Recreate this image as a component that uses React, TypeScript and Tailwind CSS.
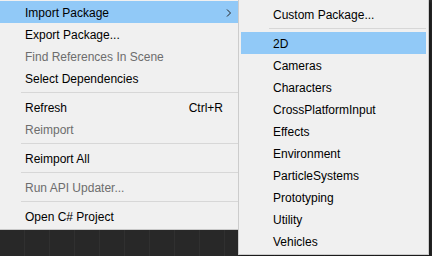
import { ReactNode } from 'react';

type Item = { label: string; disabled?: boolean; shortcut?: string; active?: boolean; submenu?: boolean } | 'sep';

const mainItems: Item[] = [
  { label: 'Import Package', active: true, submenu: true },
  { label: 'Export Package...' },
  { label: 'Find References In Scene', disabled: true },
  { label: 'Select Dependencies' },
  'sep',
  { label: 'Refresh', shortcut: 'Ctrl+R' },
  { label: 'Reimport', disabled: true },
  'sep',
  { label: 'Reimport All' },
  'sep',
  { label: 'Run API Updater...', disabled: true },
  'sep',
  { label: 'Open C# Project' },
];

const packages = [
  'Cameras',
  'Characters',
  'CrossPlatformInput',
  'Effects',
  'Environment',
  'ParticleSystems',
  'Prototyping',
  'Utility',
  'Vehicles',
];

function Separator({ indent }: { indent: string }) {
  return (
    <div className="h-[7px] flex items-center">
      <div className={`h-px flex-1 bg-[#d7d7d7] ${indent}`} />
    </div>
  );
}

function Row({ children, active, pad }: { children: ReactNode; active?: boolean; pad: string }) {
  return (
    <div className={`h-[22px] flex items-center pt-[1px] ${pad} ${active ? 'bg-[#91c9f7]' : ''}`}>{children}</div>
  );
}

export default function App() {
  return (
    <div
      className="relative w-[432px] h-[256px] overflow-hidden bg-[#282828] text-[12px] text-black"
      style={{ fontFamily: '"Segoe UI", "Liberation Sans", Arial, sans-serif' }}
    >
      {/* scene grid behind the menus */}
      <div className="absolute inset-0 flex">
        {Array.from({ length: 18 }).map((_, i) => (
          <div key={i} className="w-[25px] shrink-0 border-r border-[#303030]" />
        ))}
      </div>

      <div className="relative flex items-start">
        {/* Main context menu */}
        <div className="w-[238px] shrink-0 bg-[#f0f0f0] pt-[1px] pb-[2px] border-b border-[#c8c8c8]">
          {mainItems.map((item, i) =>
            item === 'sep' ? (
              <Separator key={i} indent="ml-[21px]" />
            ) : (
              <Row key={i} active={item.active} pad="pl-[25px] pr-[6px]">
                <span className={`flex-1 ${item.disabled ? 'text-[#6d6d6d]' : ''}`}>{item.label}</span>
                {item.shortcut && <span className="mr-[9px]">{item.shortcut}</span>}
                {item.submenu && (
                  <svg width="6" height="8" viewBox="0 0 6 8">
                    <path d="M1 0.5 L4.5 4 L1 7.5" fill="none" stroke="#222" strokeWidth="1" />
                  </svg>
                )}
              </Row>
            )
          )}
        </div>

        {/* Import Package submenu */}
        <div className="w-[191px] shrink-0 bg-[#f0f0f0] border border-t-0 border-[#cccccc] pt-[3px] pb-[2px] px-[2px] shadow-[2px_2px_2px_rgba(0,0,0,0.35)]">
          <Row pad="pl-[32px]">Custom Package...</Row>
          <Separator indent="ml-[28px]" />
          <Row pad="pl-[32px]" active>
            2D
          </Row>
          {packages.map((p) => (
            <Row key={p} pad="pl-[32px]">
              {p}
            </Row>
          ))}
        </div>
      </div>
    </div>
  );
}
